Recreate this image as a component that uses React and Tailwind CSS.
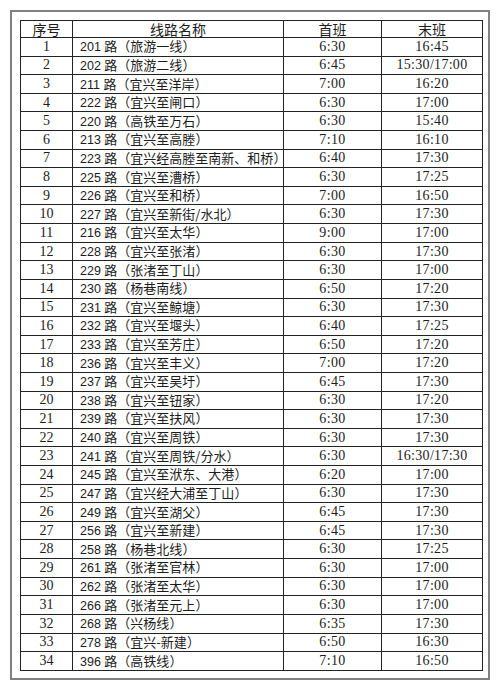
const ROWS = [
  ['201', '旅游一线', '6:30', '16:45'],
  ['202', '旅游二线', '6:45', '15:30/17:00'],
  ['211', '宜兴至洋岸', '7:00', '16:20'],
  ['222', '宜兴至闸口', '6:30', '17:00'],
  ['220', '高铁至万石', '6:30', '15:40'],
  ['213', '宜兴至高塍', '7:10', '16:10'],
  ['223', '宜兴经高塍至南新、和桥', '6:40', '17:30'],
  ['225', '宜兴至漕桥', '6:30', '17:25'],
  ['226', '宜兴至和桥', '7:00', '16:50'],
  ['227', '宜兴至新街/水北', '6:30', '17:30'],
  ['216', '宜兴至太华', '9:00', '17:00'],
  ['228', '宜兴至张渚', '6:30', '17:30'],
  ['229', '张渚至丁山', '6:30', '17:00'],
  ['230', '杨巷南线', '6:50', '17:20'],
  ['231', '宜兴至鲸塘', '6:30', '17:30'],
  ['232', '宜兴至堰头', '6:40', '17:25'],
  ['233', '宜兴至芳庄', '6:50', '17:20'],
  ['236', '宜兴至丰义', '7:00', '17:20'],
  ['237', '宜兴至吴圩', '6:45', '17:30'],
  ['238', '宜兴至钮家', '6:30', '17:20'],
  ['239', '宜兴至扶风', '6:30', '17:30'],
  ['240', '宜兴至周铁', '6:30', '17:30'],
  ['241', '宜兴至周铁/分水', '6:30', '16:30/17:30'],
  ['245', '宜兴至洑东、大港', '6:20', '17:00'],
  ['247', '宜兴经大浦至丁山', '6:30', '17:30'],
  ['249', '宜兴至湖父', '6:45', '17:30'],
  ['256', '宜兴至新建', '6:45', '17:30'],
  ['258', '杨巷北线', '6:30', '17:25'],
  ['261', '张渚至官林', '6:30', '17:00'],
  ['262', '张渚至太华', '6:30', '17:00'],
  ['266', '张渚至元上', '6:30', '17:00'],
  ['268', '兴杨线', '6:35', '17:30'],
  ['278', '宜兴-新建', '6:50', '16:30'],
  ['396', '高铁线', '7:10', '16:50'],
]

const cjk = "font-['Noto_Sans_CJK_SC',sans-serif]"
const serif = "font-['Liberation_Serif','Noto_Sans_CJK_SC',serif]"

export default function App() {
  return (
    <div className="min-h-screen bg-white pl-[10px] pt-[10px] text-[#1c1c1c]">
      <div className="w-[480px] h-[670px] border-2 border-[#808080] pl-[8px] pt-[8px]">
        <table className="w-[462px] h-[651px] table-fixed border-collapse border border-[#222]">
          <colgroup>
            <col className="w-[52px]" />
            <col className="w-[211px]" />
            <col className="w-[98px]" />
            <col className="w-[101px]" />
          </colgroup>
          <thead>
            <tr className={`${cjk} text-[14px] leading-[16px]`}>
              <th className="border border-[#222] p-0 font-normal">序号</th>
              <th className="border border-[#222] p-0 font-normal">线路名称</th>
              <th className="border border-[#222] p-0 font-normal">首班</th>
              <th className="border border-[#222] p-0 font-normal">末班</th>
            </tr>
          </thead>
          <tbody>
            {ROWS.map((r, i) => (
              <tr key={i}>
                <td className={`${serif} border border-[#222] p-0 text-center text-[14px] leading-[16px]`}>{i + 1}</td>
                <td className={`${cjk} border border-[#222] p-0 pl-[7px] text-[13px] leading-[16px] whitespace-nowrap`}>
                  <span className="font-['Liberation_Sans',sans-serif] text-[12.5px]">{r[0]} </span>路（{r[1]}）
                </td>
                <td className={`${serif} border border-[#222] p-0 text-center text-[14px] leading-[16px] tracking-[0.4px]`}>{r[2]}</td>
                <td className={`${serif} border border-[#222] p-0 text-center text-[14px] leading-[16px] tracking-[0.3px]`}>{r[3]}</td>
              </tr>
            ))}
          </tbody>
        </table>
      </div>
    </div>
  )
}
